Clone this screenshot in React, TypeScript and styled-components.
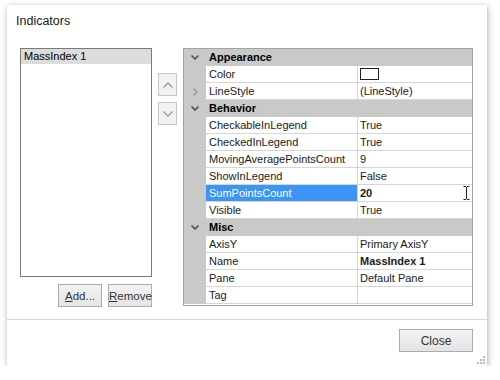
import { styled, createGlobalStyle } from "styled-components";

const GlobalStyle = createGlobalStyle`
  body {
    margin: 0;
    background: #ffffff;
    font-family: "Liberation Sans", Arial, sans-serif;
  }
`;

const Dialog = styled.div`
  position: relative;
  margin: 5px 0 0 7px;
  width: 480px;
  height: 361px;
  background: #ffffff;
  box-shadow: 1px 2px 7px rgba(0, 0, 0, 0.28), 0 0 3px rgba(0, 0, 0, 0.08);
  display: flex;
  flex-direction: column;
  box-sizing: border-box;
`;

const Header = styled.div`
  height: 43px;
  box-sizing: border-box;
  padding: 9px 0 0 9px;
  font-size: 12.5px;
  line-height: 14px;
  color: #202020;
`;

const Body = styled.div`
  display: flex;
  padding-left: 13px;
  height: 271px;
`;

const LeftColumn = styled.div`
  display: flex;
  flex-direction: column;
  width: 132px;
`;

const ListBox = styled.div`
  height: 229px;
  box-sizing: border-box;
  border: 1px solid #7a7a7a;
  background: #ffffff;
`;

const ListItem = styled.div<{ $selected?: boolean }>`
  height: 15px;
  line-height: 15px;
  padding-left: 3px;
  font-size: 11px;
  color: #000;
  background: ${(p) => (p.$selected ? "#dcdcdc" : "transparent")};
`;

const ButtonRow = styled.div`
  display: flex;
  justify-content: flex-end;
  gap: 6px;
  margin-top: 7px;
`;

const PushButton = styled.button<{ $w: number }>`
  width: ${(p) => p.$w}px;
  height: 23px;
  padding: 0;
  box-sizing: border-box;
  border: 1px solid #acacac;
  background: linear-gradient(#f3f3f3, #e4e4e4);
  font-family: "Liberation Sans", Arial, sans-serif;
  font-size: 11.5px;
  color: #333;
  u {
    text-decoration: underline;
  }
`;

const MoveColumn = styled.div`
  width: 31px;
  display: flex;
  flex-direction: column;
  align-items: center;
  padding-top: 25px;
  gap: 6px;
`;

const MoveButton = styled.div`
  width: 19px;
  height: 23px;
  box-sizing: border-box;
  border: 1px solid #c6c6c6;
  background: #f2f2f2;
  display: flex;
  align-items: center;
  justify-content: center;
`;

const Grid = styled.div`
  width: 290px;
  height: 258px;
  box-sizing: border-box;
  border: 1px solid #a3a3a3;
  background: #ffffff;
  display: flex;
  flex-direction: column;
`;

const Row = styled.div`
  display: flex;
  height: 17px;
  flex-shrink: 0;
`;

const Indent = styled.div`
  width: 22px;
  background: #c9c9c8;
  display: flex;
  align-items: center;
  justify-content: center;
  flex-shrink: 0;
`;

const CategoryLabel = styled.div`
  flex: 1;
  background: #c9c9c8;
  font-size: 11px;
  font-weight: bold;
  line-height: 17px;
  padding-left: 3px;
  color: #000;
`;

const NameCell = styled.div<{ $selected?: boolean }>`
  width: 152px;
  box-sizing: border-box;
  border-right: 1px solid #d6d6d6;
  border-bottom: 1px solid #d6d6d6;
  padding-left: 3px;
  font-size: 11px;
  line-height: 16px;
  color: ${(p) => (p.$selected ? "#ffffff" : "#1a1a1a")};
  background: ${(p) => (p.$selected ? "#3a95f7" : "#ffffff")};
  white-space: nowrap;
`;

const ValueCell = styled.div<{ $bold?: boolean }>`
  flex: 1;
  display: flex;
  align-items: center;
  box-sizing: border-box;
  border-bottom: 1px solid #d6d6d6;
  padding-left: 2px;
  font-size: 11px;
  line-height: 16px;
  color: #1a1a1a;
  font-weight: ${(p) => (p.$bold ? "bold" : "normal")};
  white-space: nowrap;
`;

const Swatch = styled.div`
  width: 19px;
  height: 12px;
  margin-top: -1px;
  box-sizing: border-box;
  border: 1px solid #202020;
  background: #ffffff;
`;

const Cursor = styled.svg`
  margin-left: auto;
  margin-right: 2px;
`;

const Footer = styled.div`
  border-top: 1px solid #dadada;
  flex: 1;
  display: flex;
  justify-content: flex-end;
  align-items: flex-start;
  padding: 9px 14px 0 0;
`;

const CloseButton = styled(PushButton)`
  font-size: 12px;
`;

const Grip = styled.svg`
  position: absolute;
  right: 2px;
  bottom: 2px;
`;

const Chevron = ({ dir, color }: { dir: "down" | "right"; color: string }) =>
  dir === "down" ? (
    <svg width="8" height="5" viewBox="0 0 8 5">
      <polyline points="0.5,0.5 4,4 7.5,0.5" fill="none" stroke={color} strokeWidth="1.5" />
    </svg>
  ) : (
    <svg width="5" height="8" viewBox="0 0 5 8">
      <polyline points="0.5,0.5 4,4 0.5,7.5" fill="none" stroke={color} strokeWidth="1.5" />
    </svg>
  );

const Arrow = ({ up }: { up?: boolean }) => (
  <svg width="10" height="6" viewBox="0 0 10 6">
    <polyline
      points={up ? "0.5,5.5 5,1 9.5,5.5" : "0.5,0.5 5,5 9.5,0.5"}
      fill="none"
      stroke="#9c9c9c"
      strokeWidth="1.4"
    />
  </svg>
);

type Item =
  | { kind: "cat"; label: string }
  | { kind: "prop"; name: string; value?: string; bold?: boolean; swatch?: boolean; expandable?: boolean; selected?: boolean };

const items: Item[] = [
  { kind: "cat", label: "Appearance" },
  { kind: "prop", name: "Color", swatch: true },
  { kind: "prop", name: "LineStyle", value: "(LineStyle)", expandable: true },
  { kind: "cat", label: "Behavior" },
  { kind: "prop", name: "CheckableInLegend", value: "True" },
  { kind: "prop", name: "CheckedInLegend", value: "True" },
  { kind: "prop", name: "MovingAveragePointsCount", value: "9" },
  { kind: "prop", name: "ShowInLegend", value: "False" },
  { kind: "prop", name: "SumPointsCount", value: "20", bold: true, selected: true },
  { kind: "prop", name: "Visible", value: "True" },
  { kind: "cat", label: "Misc" },
  { kind: "prop", name: "AxisY", value: "Primary AxisY" },
  { kind: "prop", name: "Name", value: "MassIndex 1", bold: true },
  { kind: "prop", name: "Pane", value: "Default Pane" },
  { kind: "prop", name: "Tag", value: "" },
];

const App = () => {
  return (
    <>
      <GlobalStyle />
      <Dialog>
        <Header>Indicators</Header>
        <Body>
          <LeftColumn>
            <ListBox>
              <ListItem $selected>MassIndex 1</ListItem>
            </ListBox>
            <ButtonRow>
              <PushButton $w={44}>
                <u>A</u>dd...
              </PushButton>
              <PushButton $w={44}>
                <u>R</u>emove
              </PushButton>
            </ButtonRow>
          </LeftColumn>
          <MoveColumn>
            <MoveButton>
              <Arrow up />
            </MoveButton>
            <MoveButton>
              <Arrow />
            </MoveButton>
          </MoveColumn>
          <Grid>
            {items.map((it, i) =>
              it.kind === "cat" ? (
                <Row key={i}>
                  <Indent>
                    <Chevron dir="down" color="#4a4a4a" />
                  </Indent>
                  <CategoryLabel>{it.label}</CategoryLabel>
                </Row>
              ) : (
                <Row key={i}>
                  <Indent>{it.expandable && <Chevron dir="right" color="#9a9a9a" />}</Indent>
                  <NameCell $selected={it.selected}>{it.name}</NameCell>
                  <ValueCell $bold={it.bold}>
                    {it.swatch ? <Swatch /> : it.value}
                    {it.selected && (
                      <Cursor width="7" height="14" viewBox="0 0 7 14">
                        <path d="M0.5 0.5h2.5M4 0.5h2.5M3.5 1v12M0.5 13.5h2.5M4 13.5h2.5" stroke="#222" strokeWidth="1" fill="none" />
                      </Cursor>
                    )}
                  </ValueCell>
                </Row>
              )
            )}
          </Grid>
        </Body>
        <Footer>
          <CloseButton $w={74}>Close</CloseButton>
        </Footer>
        <Grip width="9" height="9" viewBox="0 0 9 9">
          <g fill="#b8b8b8">
            <rect x="7" y="1" width="2" height="2" />
            <rect x="4" y="4" width="2" height="2" />
            <rect x="7" y="4" width="2" height="2" />
            <rect x="1" y="7" width="2" height="2" />
            <rect x="4" y="7" width="2" height="2" />
            <rect x="7" y="7" width="2" height="2" />
          </g>
        </Grip>
      </Dialog>
    </>
  );
};

export default App;
